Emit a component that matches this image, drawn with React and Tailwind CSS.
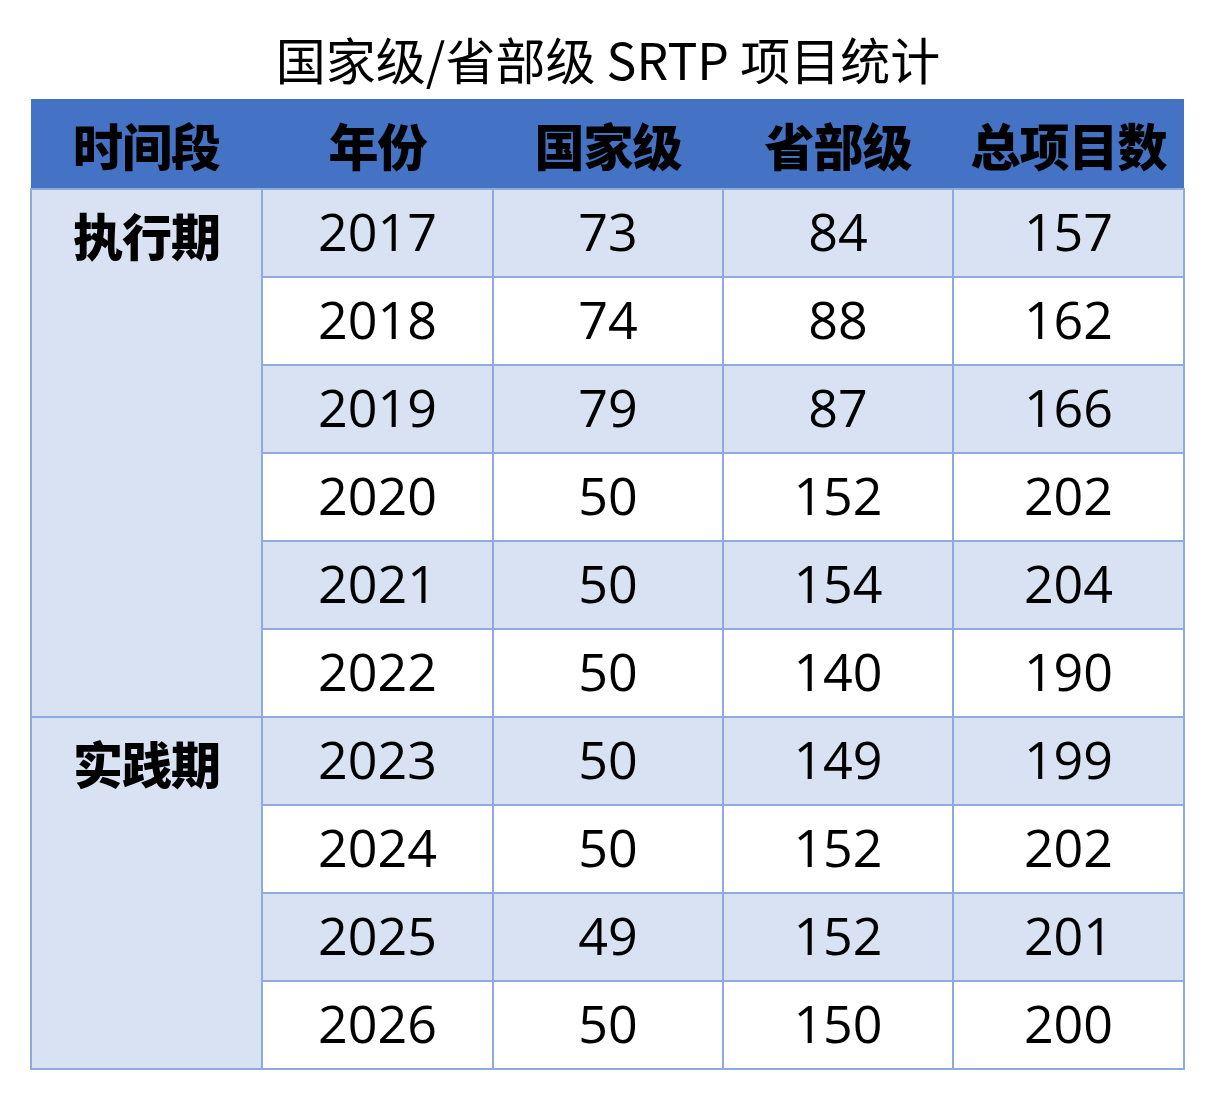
import React from "react";

const font = { fontFamily: '"Noto Sans CJK SC", "Noto Sans", sans-serif' };
const numFont = { fontFamily: '"Open Sans", "Noto Sans", sans-serif' };

const groups = [
  {
    label: "执行期",
    rows: [
      ["2017", "73", "84", "157"],
      ["2018", "74", "88", "162"],
      ["2019", "79", "87", "166"],
      ["2020", "50", "152", "202"],
      ["2021", "50", "154", "204"],
      ["2022", "50", "140", "190"],
    ],
  },
  {
    label: "实践期",
    rows: [
      ["2023", "50", "149", "199"],
      ["2024", "50", "152", "202"],
      ["2025", "49", "152", "201"],
      ["2026", "50", "150", "200"],
    ],
  },
];

export default function App() {
  let idx = 0;
  return (
    <div className="w-[1216px] h-[1102px] bg-white text-black" style={font}>
      <div className="pt-[33px] h-[83px] text-center text-[50px] leading-[50px] font-normal">
        国家级/省部级 SRTP 项目统计
      </div>
      <div className="pt-[16px] pl-[30px]">
        <table className="w-[1153px] table-fixed border-collapse">
          <colgroup>
            <col className="w-[231px]" />
            <col className="w-[231px]" />
            <col className="w-[230px]" />
            <col className="w-[230px]" />
            <col className="w-[231px]" />
          </colgroup>
          <thead>
            <tr className="h-[90px] bg-[#4472C4]">
              {["时间段", "年份", "国家级", "省部级", "总项目数"].map((h) => (
                <th
                  key={h}
                  className="p-0 text-center align-middle text-[50px] leading-[50px] font-black tracking-[-1px]"
                >
                  {h}
                </th>
              ))}
            </tr>
          </thead>
          <tbody>
            {groups.map((g) =>
              g.rows.map((r, i) => {
                const band = idx % 2 === 0;
                idx++;
                return (
                  <tr key={r[0]} className="h-[88px]">
                    {i === 0 && (
                      <td
                        rowSpan={g.rows.length}
                        className="p-0 align-top border-2 border-[#8FAADC] bg-[#D9E2F3]"
                      >
                        <div className="h-[86px] flex items-center justify-center text-[50px] leading-[50px] font-black tracking-[-1px] pt-[2px]">
                          {g.label}
                        </div>
                      </td>
                    )}
                    {r.map((v, j) => (
                      <td
                        key={j}
                        style={numFont}
                        className={
                          "p-0 pb-[4px] text-center align-middle border-2 border-[#8FAADC] text-[52px] leading-[60px] font-normal " +
                          (band ? "bg-[#D9E2F3]" : "bg-white")
                        }
                      >
                        {v}
                      </td>
                    ))}
                  </tr>
                );
              })
            )}
          </tbody>
        </table>
      </div>
    </div>
  );
}
